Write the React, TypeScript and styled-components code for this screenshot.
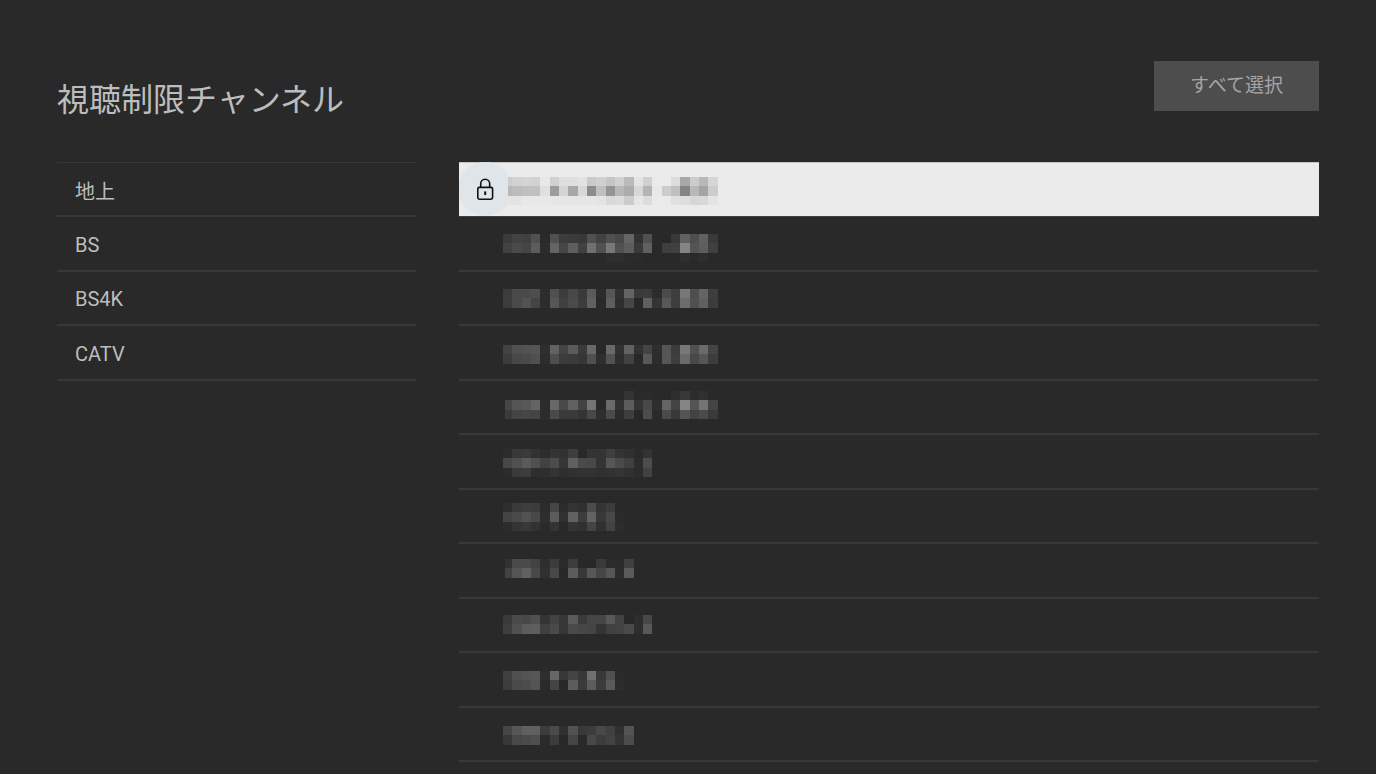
import React, { useState } from "react";
import styled, { createGlobalStyle } from "styled-components";

const GlobalStyle = createGlobalStyle`
  * { box-sizing: border-box; }
  body {
    margin: 0;
    background: #292929;
    color: #bdbdbd;
    font-family: Roboto, "Noto Sans CJK JP", sans-serif;
  }
`;

const Page = styled.main`
  min-height: 100vh;
  padding: 61px 57px 0;
`;

const Header = styled.header`
  display: flex;
  justify-content: space-between;
  align-items: flex-start;
  height: 101px;
`;

const Title = styled.h1`
  margin: 15px 0 0;
  font-size: 32px;
  line-height: 48px;
  font-weight: 400;
`;

const SelectAll = styled.button`
  width: 165px;
  height: 50px;
  border: 0;
  padding: 0;
  background: #4d4d4d;
  color: #a6a6a6;
  font: inherit;
  font-size: 19px;
  line-height: 50px;
`;

const Columns = styled.div`
  display: grid;
  grid-template-columns: 359px 1fr;
  column-gap: 43px;
  align-items: start;
`;

const List = styled.ul<{ $outlined?: boolean }>`
  margin: 0;
  padding: 0;
  list-style: none;
  box-shadow: ${(p) => (p.$outlined ? "inset 0 1px #383838" : "none")};
`;

const Item = styled.li`
  height: 54px;
  &:nth-child(even) {
    height: 55px;
  }
`;

const RowButton = styled.button<{ $selected?: boolean }>`
  display: flex;
  align-items: center;
  width: 100%;
  height: 100%;
  border: 0;
  padding: 0;
  text-align: left;
  font: inherit;
  color: inherit;
  overflow: hidden;
  background: ${(p) => (p.$selected ? "#ebebeb" : "transparent")};
  box-shadow: ${(p) =>
    p.$selected
      ? "inset 0 1px #c4c4c4, 0 1px #3f3f3f"
      : "inset 0 -1px #383838, 0 1px #383838"};
  outline: none;
`;

const CategoryButton = styled(RowButton)`
  padding: 2px 18px 0;
  font-size: 20px;
`;

const LockSlot = styled.span<{ $locked?: boolean }>`
  display: grid;
  place-items: center;
  flex: none;
  width: 54px;
  height: 54px;
  margin-left: -1px;
  border-radius: 50%;
  background: ${(p) => (p.$locked ? "#dfe5e9" : "transparent")};
`;

const MaskedName = styled.svg`
  flex: none;
  margin-left: -9px;
  overflow: visible;
`;

type Channel = { top: number; inset?: number; cells: string[] };

/* Each channel name is pixelated: grey levels per mosaic cell, line by line. */
const channels: Channel[] = [
  {
    top: 15,
    inset: 5,
    cells: [
      "cc d2 d4 d2 e8 d0 df df e2 ca d0 c6 d0 ba e4 d0 ea ea dc a8 cc b8 d6",
      "b8 bc c0 c0 e0 9c d4 a8 d8 8c c0 94 b8 ac d8 b4 e8 cc c0 84 b8 a4 cc",
      "e4 e4 e8 e8 e8 e6 e6 e6 e6 e6 e4 d8 dc cc e6 dc ea ea e0 de d6 d8 e4",
    ],
  },
  {
    top: 17,
    cells: [
      "3a 42 40 50 2a 50 3c 3a 38 50 42 50 48 64 32 50 29 28 38 60 4e 60 3a",
      "42 4a 44 5c 2c 64 46 5e 40 70 50 78 50 5c 3a 60 29 3e 40 84 54 5e 40",
      "29 29 29 29 29 29 29 29 29 29 29 2e 2e 2a 2b 29 29 29 29 2e 2a 2e 29",
    ],
  },
  {
    top: 18,
    cells: [
      "3c 4a 4a 4e 2c 50 3c 48 3a 5a 2c 56 32 64 3a 3c 2c 4c 3e 78 4e 64 3e",
      "3c 4a 52 44 2c 56 40 4a 3c 60 2a 5e 2e 46 28 60 34 58 3e 6c 50 60 3c",
    ],
  },
  {
    top: 19,
    cells: [
      "42 50 52 54 2e 62 44 5a 3a 68 28 68 32 62 32 44 2e 56 3c 78 50 6a 44",
      "3c 48 4a 50 2c 4e 3c 3a 36 50 2e 52 2e 42 28 58 2c 56 3e 6a 48 56 3c",
    ],
  },
  {
    top: 11,
    inset: 2,
    cells: [
      "29 29 29 29 29 29 29 29 29 29 29 29 29 34 2a 2b 29 29 2e 38 2c 30 29",
      "46 54 58 64 2c 68 48 60 42 74 28 6a 32 5c 34 48 2e 64 44 84 54 74 44",
      "3a 44 46 44 2c 4a 3a 3a 34 48 2e 4a 2c 3e 28 4c 2a 4a 38 54 42 4a 3a",
    ],
  },
  {
    top: 14,
    cells: [
      "2c 38 3a 32 2c 34 32 3e 28 34 34 3e 34 30 2a 32",
      "48 50 5a 50 42 4c 36 60 4a 48 34 56 4a 40 2c 4c",
      "2c 3a 3c 2e 2e 34 2e 30 32 32 30 32 34 30 2c 42",
    ],
  },
  {
    top: 14,
    cells: [
      "2e 3a 3e 3c 2c 46 2c 34 30 4c 34 3c 29",
      "44 4a 52 48 2e 5c 30 60 3c 62 38 48 2a",
      "2c 34 38 32 2a 34 28 34 30 44 30 42 2c",
    ],
  },
  {
    top: 15,
    inset: 2,
    cells: [
      "32 4a 4a 42 2e 3c 2a 3c 28 28 3a 2c 2a 40",
      "42 54 60 48 30 48 28 5c 38 58 46 56 2c 5a",
    ],
  },
  {
    top: 17,
    cells: [
      "3a 4a 48 50 34 42 36 5a 3a 46 46 58 42 28 2e 48",
      "3e 50 5c 5e 40 4a 36 4a 46 44 34 40 42 4a 2e 58",
    ],
  },
  {
    top: 18,
    cells: [
      "40 50 54 56 2e 66 38 44 38 70 38 50 2a",
      "3c 4a 4c 54 2a 44 28 5c 3a 5c 3c 5a 2c",
    ],
  },
  {
    top: 19,
    cells: [
      "46 56 60 60 3c 4a 30 52 38 3c 48 40 30 54",
      "38 48 4a 4e 2a 3c 28 46 2a 48 3c 42 34 4c",
    ],
  },
];

const edge = (i: number) => Math.round((i * 28) / 3);

function Mosaic({ top, inset = 0, cells }: Channel) {
  return (
    <MaskedName width="215" height="54" shapeRendering="crispEdges" aria-hidden="true">
      {cells.map((line, row) =>
        line.split(" ").map((level, col) => {
          const x = col === 0 ? inset : edge(col);
          return (
            <rect
              key={`${row}-${col}`}
              x={x}
              y={top + edge(row)}
              width={edge(col + 1) - x}
              height={edge(row + 1) - edge(row)}
              fill={`#${level}${level}${level}`}
            />
          );
        })
      )}
    </MaskedName>
  );
}

function LockIcon() {
  return (
    <svg width="18" height="24" viewBox="0 -1 18 24" fill="none" stroke="#111" strokeWidth="1.6" aria-hidden="true">
      <rect x="1.8" y="9.4" width="14.8" height="11.8" rx="1.6" />
      <path d="M4.7 9.4V5.8a4.5 4.5 0 0 1 9 0V9.4" />
      <path d="M9.2 13.4v3.6" strokeWidth="2" />
    </svg>
  );
}

const categories = ["地上", "BS", "BS4K", "CATV"];

export default function App() {
  const [selected, setSelected] = useState(0);
  return (
    <Page lang="ja">
      <GlobalStyle />
      <Header>
        <Title>視聴制限チャンネル</Title>
        <SelectAll type="button">すべて選択</SelectAll>
      </Header>
      <Columns>
        <nav>
          <List $outlined>
            {categories.map((name) => (
              <Item key={name}>
                <CategoryButton type="button">{name}</CategoryButton>
              </Item>
            ))}
          </List>
        </nav>
        <List>
          {channels.map((channel, i) => (
            <Item key={i}>
              <RowButton
                type="button"
                aria-label={`チャンネル ${i + 1}`}
                $selected={i === selected}
                onFocus={() => setSelected(i)}
              >
                <LockSlot $locked={i === 0}>{i === 0 && <LockIcon />}</LockSlot>
                <Mosaic {...channel} />
              </RowButton>
            </Item>
          ))}
        </List>
      </Columns>
    </Page>
  );
}
